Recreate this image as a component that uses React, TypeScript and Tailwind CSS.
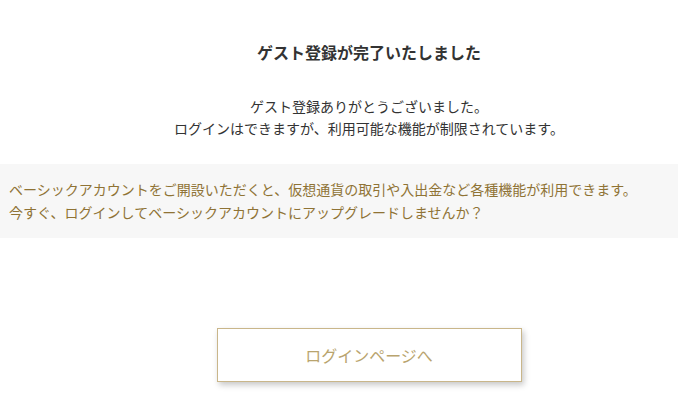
export default function App() {
  return (
    <main className="min-h-screen bg-white text-[#333] font-['Noto_Sans_CJK_JP','Noto_Sans',sans-serif]">
      {/* heading + message */}
      <section className="pl-[60px] pt-[40px] text-center">
        <h1 className="text-[16px] font-bold leading-[24px]">ゲスト登録が完了いたしました</h1>
        <p className="mt-[31px] text-[14px] leading-[22px]">
          ゲスト登録ありがとうございました。
          <br />
          ログインはできますが、利用可能な機能が制限されています。
        </p>
      </section>

      {/* upgrade notice */}
      <section className="mt-[25px] bg-[#f7f7f7] px-[9px] py-[14px] text-[14px] leading-[23px] text-[#8f7335]">
        <p>ベーシックアカウントをご開設いただくと、仮想通貨の取引や入出金など各種機能が利用できます。</p>
        <p>今すぐ、ログインしてベーシックアカウントにアップグレードしませんか？</p>
      </section>

      {/* action */}
      <div className="flex justify-center pl-[60px] pt-[90px]">
        <a
          href="#"
          className="flex h-[54px] w-[305px] items-center justify-center border border-[#c9b68a] bg-white text-[16px] text-[#b9a46e] shadow-[2px_3px_6px_rgba(0,0,0,0.22)]"
        >
          ログインページへ
        </a>
      </div>
    </main>
  );
}
